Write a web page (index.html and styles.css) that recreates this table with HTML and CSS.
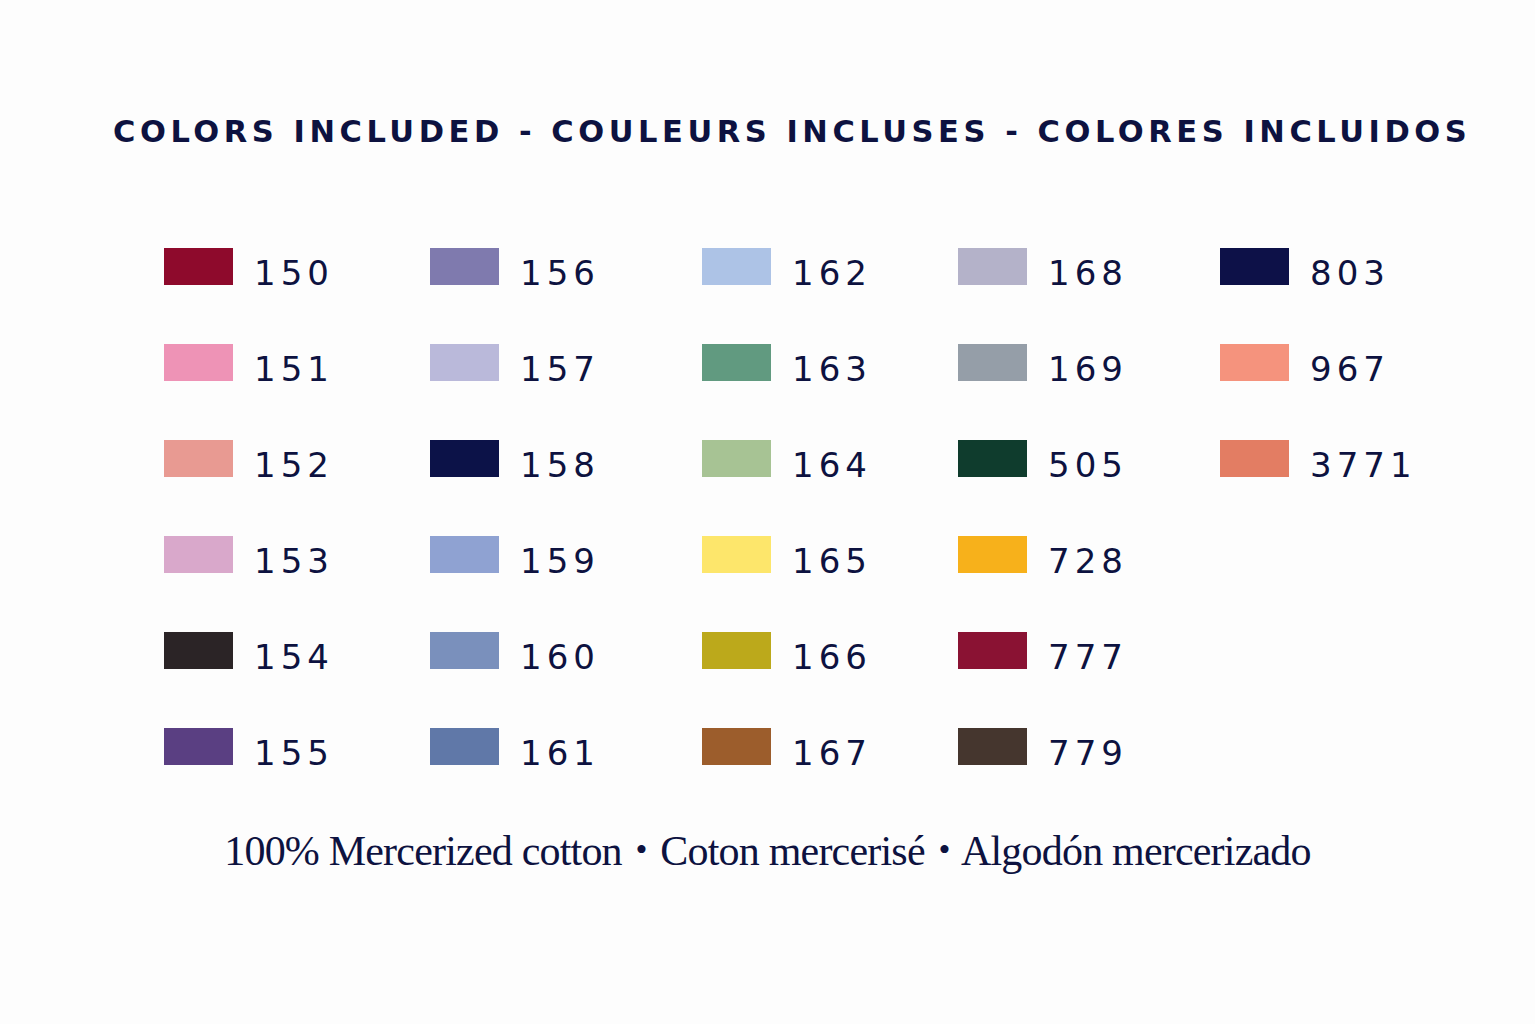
FILE: index.html
```html
<!DOCTYPE html>
<html lang="en">
<head>
<meta charset="utf-8">
<title>Colors included</title>
<link rel="stylesheet" href="styles.css">
</head>
<body>
<main class="card">
  <h1 class="title">COLORS INCLUDED - COULEURS INCLUSES - COLORES INCLUIDOS</h1>
  <section class="grid">
    <div class="item"><span class="sw" style="background:#8e0a2c"></span><span class="num">150</span></div>
    <div class="item"><span class="sw" style="background:#7f7aae"></span><span class="num">156</span></div>
    <div class="item"><span class="sw" style="background:#adc3e6"></span><span class="num">162</span></div>
    <div class="item"><span class="sw" style="background:#b4b2c9"></span><span class="num">168</span></div>
    <div class="item"><span class="sw" style="background:#0d1148"></span><span class="num">803</span></div>

    <div class="item"><span class="sw" style="background:#ee93b6"></span><span class="num">151</span></div>
    <div class="item"><span class="sw" style="background:#bab9da"></span><span class="num">157</span></div>
    <div class="item"><span class="sw" style="background:#619a80"></span><span class="num">163</span></div>
    <div class="item"><span class="sw" style="background:#959ea8"></span><span class="num">169</span></div>
    <div class="item"><span class="sw" style="background:#f5937d"></span><span class="num">967</span></div>

    <div class="item"><span class="sw" style="background:#e89a92"></span><span class="num">152</span></div>
    <div class="item"><span class="sw" style="background:#0c1248"></span><span class="num">158</span></div>
    <div class="item"><span class="sw" style="background:#a7c394"></span><span class="num">164</span></div>
    <div class="item"><span class="sw" style="background:#0f3c2d"></span><span class="num">505</span></div>
    <div class="item"><span class="sw" style="background:#e37d63"></span><span class="num">3771</span></div>

    <div class="item"><span class="sw" style="background:#d9a8cb"></span><span class="num">153</span></div>
    <div class="item"><span class="sw" style="background:#8fa2d2"></span><span class="num">159</span></div>
    <div class="item"><span class="sw" style="background:#fde66b"></span><span class="num">165</span></div>
    <div class="item"><span class="sw" style="background:#f7b11b"></span><span class="num">728</span></div>
    <div class="item empty"></div>

    <div class="item"><span class="sw" style="background:#2b2426"></span><span class="num">154</span></div>
    <div class="item"><span class="sw" style="background:#7a90bc"></span><span class="num">160</span></div>
    <div class="item"><span class="sw" style="background:#bca91b"></span><span class="num">166</span></div>
    <div class="item"><span class="sw" style="background:#8a1233"></span><span class="num">777</span></div>
    <div class="item empty"></div>

    <div class="item"><span class="sw" style="background:#5a3f82"></span><span class="num">155</span></div>
    <div class="item"><span class="sw" style="background:#6078a8"></span><span class="num">161</span></div>
    <div class="item"><span class="sw" style="background:#9c5d2c"></span><span class="num">167</span></div>
    <div class="item"><span class="sw" style="background:#45362e"></span><span class="num">779</span></div>
    <div class="item empty"></div>
  </section>
  <p class="footer">100% Mercerized cotton <span class="dot">•</span> Coton mercerisé <span class="dot">•</span> Algodón mercerizado</p>
</main>
</body>
</html>
```

FILE: styles.css
```css
html, body {
  margin: 0;
  padding: 0;
  background: #fdfdfd;
}
.card {
  width: 1535px;
  height: 1024px;
  box-sizing: border-box;
  padding-top: 112px;
  color: #0d1240;
}
.title {
  margin: 0 0 0 113px;
  font-family: "DejaVu Sans", sans-serif;
  font-weight: bold;
  font-size: 30.5px;
  line-height: 40px;
  letter-spacing: 4.55px;
  white-space: nowrap;
}
.grid {
  display: grid;
  grid-template-columns: 266px 272px 256px 262px auto;
  grid-auto-rows: 37px;
  row-gap: 59px;
  margin: 96px 0 0 164px;
}
.item {
  display: flex;
  align-items: baseline;
  gap: 21px;
}
.sw {
  display: block;
  width: 69px;
  height: 37px;
}
.num {
  font-family: "DejaVu Sans", sans-serif;
  font-size: 34px;
  line-height: 1;
  letter-spacing: 5px;
}
.footer {
  margin: 60px 0 0 0;
  text-align: center;
  font-family: "Liberation Serif", serif;
  font-size: 42px;
  line-height: 50px;
  letter-spacing: -0.8px;
}
.dot {
  display: inline-block;
  margin: 0 4px;
  font-size: 34px;
  vertical-align: 4px;
}
```
